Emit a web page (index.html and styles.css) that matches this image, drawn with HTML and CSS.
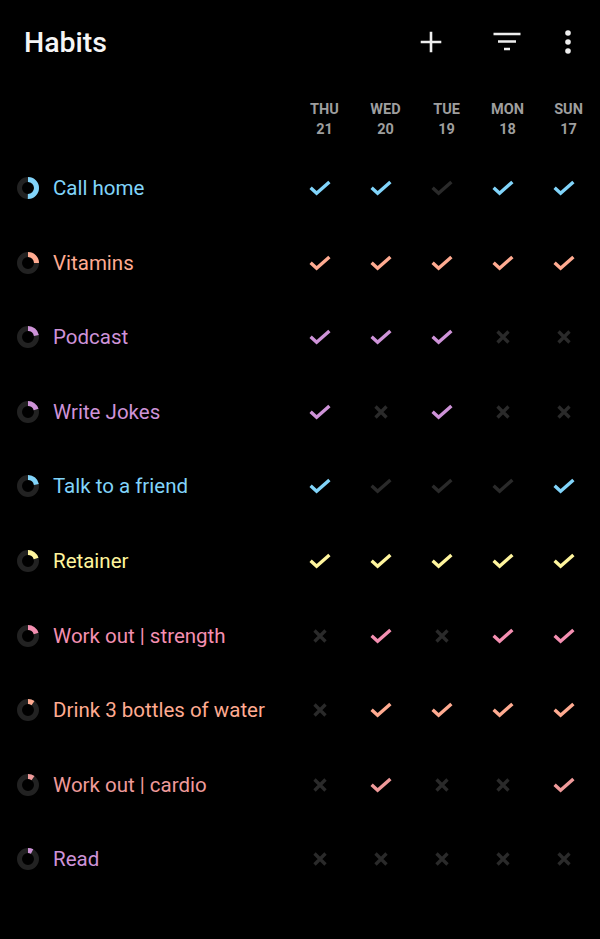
FILE: index.html
```html
<!DOCTYPE html>
<html>
<head>
<meta charset="utf-8">
<link rel="stylesheet" href="styles.css">
</head>
<body>
<svg width="0" height="0" class="defs">
  <defs>
    <symbol id="chk" viewBox="0 0 22 16"><polyline points="1.6,7.8 7.6,13.3 20.4,1.9" fill="none" stroke="currentColor" stroke-width="3.4" stroke-linejoin="miter" stroke-linecap="butt"/></symbol>
    <symbol id="crs" viewBox="0 0 16 16"><path d="M2.5 2.5L13.5 13.5M13.5 2.5L2.5 13.5" fill="none" stroke="currentColor" stroke-width="3.3"/></symbol>
  </defs>
</svg>
<div class="app">
  <header class="bar">
    <h1 class="title">Habits</h1>
    <div class="actions">
      <svg class="act" width="26" height="26" viewBox="0 0 24 24"><path d="M12 2.5v19M2.5 12h19" stroke="#eee" stroke-width="2.4" fill="none"/></svg>
      <svg class="act" width="30" height="26" viewBox="0 0 30 26"><path d="M1.5 5h27M6 12.5h18M12 20h6" stroke="#eee" stroke-width="2.6" fill="none"/></svg>
      <svg class="act dots" width="10" height="26" viewBox="0 0 10 26"><circle cx="5" cy="4" r="2.8" fill="#eee"/><circle cx="5" cy="13" r="2.8" fill="#eee"/><circle cx="5" cy="22" r="2.8" fill="#eee"/></svg>
    </div>
  </header>
  <div class="days">
    <div></div>
    <div class="day">THU<br>21</div>
    <div class="day">WED<br>20</div>
    <div class="day">TUE<br>19</div>
    <div class="day">MON<br>18</div>
    <div class="day">SUN<br>17</div>
  </div>
  <div id="list" class="list"></div>
</div>
<script src="app.js"></script>
</body>
</html>
```

FILE: app.js
```js
const habits = [
  ["Call home", "#81d4fa", 0.5, "YYNYY"],
  ["Vitamins", "#ffab91", 0.25, "YYYYY"],
  ["Podcast", "#ce93d8", 0.22, "YYYXX"],
  ["Write Jokes", "#ce93d8", 0.2, "YXYXX"],
  ["Talk to a friend", "#81d4fa", 0.22, "YNNNY"],
  ["Retainer", "#fff59d", 0.2, "YYYYY"],
  ["Work out | strength", "#f48fb1", 0.2, "XYXYY"],
  ["Drink 3 bottles of water", "#ffab91", 0.1, "XYYYY"],
  ["Work out | cardio", "#ef9a9a", 0.1, "XYXXY"],
  ["Read", "#ce93d8", 0.08, "XXXXX"]
];
const list = document.getElementById("list");
const C = 2 * Math.PI * 8.5;
habits.forEach(([name, color, p, marks]) => {
  const row = document.createElement("div");
  row.className = "row";
  let html = '<div class="name"><svg class="ring" width="24" height="24" viewBox="0 0 24 24">' +
    '<circle cx="12" cy="12" r="8.5" fill="none" stroke="#222" stroke-width="5"/>' +
    '<circle cx="12" cy="12" r="8.5" fill="none" stroke="' + color + '" stroke-width="5" stroke-dasharray="' + (C * p).toFixed(2) + ' ' + C.toFixed(2) + '" transform="rotate(-90 12 12)"/>' +
    '</svg><span style="color:' + color + '">' + name + '</span></div>';
  for (const m of marks) {
    if (m === "Y") html += '<div class="cell"><svg class="chk" style="color:' + color + '"><use href="#chk"/></svg></div>';
    else if (m === "N") html += '<div class="cell"><svg class="chk off"><use href="#chk"/></svg></div>';
    else html += '<div class="cell"><svg class="crs off"><use href="#crs"/></svg></div>';
  }
  row.innerHTML = html;
  list.appendChild(row);
});
```

FILE: styles.css
```css
html, body {
  margin: 0;
  padding: 0;
  background: #000;
}
body {
  font-family: Roboto, "Noto Sans", sans-serif;
  color: #fff;
  width: 600px;
  height: 939px;
  overflow: hidden;
}
.defs { position: absolute; }
.bar {
  height: 84px;
  display: flex;
  align-items: center;
  justify-content: space-between;
  padding: 0 27px 0 24px;
}
.title {
  margin: 0;
  font-size: 28.5px;
  font-weight: 500;
  color: #f5f5f5;
}
.actions {
  display: flex;
  align-items: center;
}
.act { display: block; }
.actions .act:nth-child(1) { margin-right: 48px; }
.actions .act:nth-child(2) { margin-right: 41px; }
.days, .row {
  display: grid;
  grid-template-columns: 289.5px repeat(5, 61px);
}
.days {
  padding: 16px 0 11px;
  height: 40px;
}
.day {
  text-align: center;
  padding-left: 9px;
  font-size: 14.5px;
  line-height: 20px;
  font-weight: 700;
  color: #9e9e9e;
}
.row {
  height: 74.56px;
  align-items: center;
}
.name {
  display: flex;
  align-items: center;
  padding-left: 16px;
  font-size: 20.5px;
  white-space: nowrap;
}
.ring { display: block; margin-right: 13px; }
.cell {
  display: flex;
  justify-content: center;
  align-items: center;
}
.chk { width: 22px; height: 16px; display: block; }
.crs { width: 16px; height: 16px; display: block; }
.off { color: #2a2a2a; }
```
